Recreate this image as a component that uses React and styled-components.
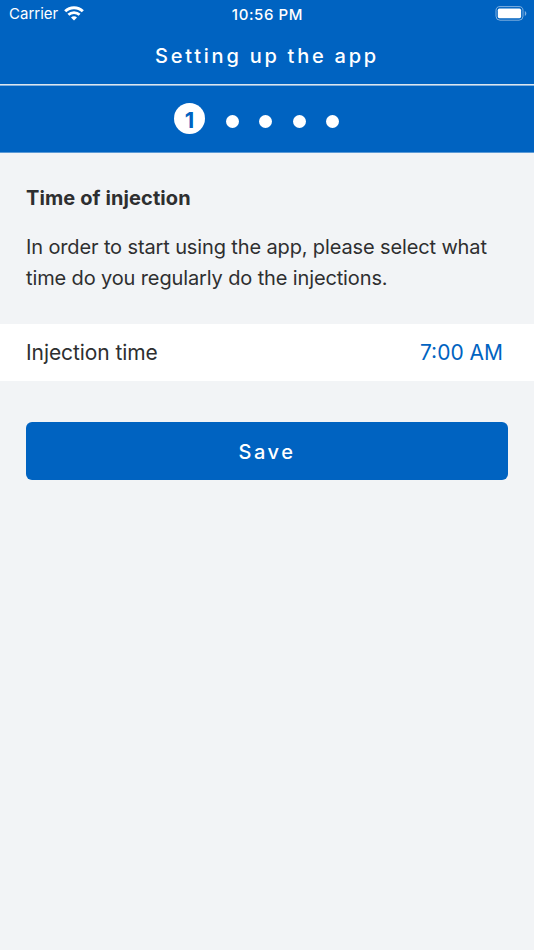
import styled, { createGlobalStyle } from "styled-components";

const GlobalStyle = createGlobalStyle`
  * {
    box-sizing: border-box;
  }
  body {
    margin: 0;
    background: #f2f4f6;
    color: #2e2f30;
    font-family: Inter, "Liberation Sans", sans-serif;
  }
`;

const Screen = styled.div`
  width: 100%;
  min-height: 950px;
  background: #f2f4f6;
`;

const StatusBar = styled.div`
  display: grid;
  grid-template-columns: 1fr auto 1fr;
  align-items: center;
  height: 27px;
  padding: 0 7px 0 9px;
  background: #0063c1;
  color: #fff;
  font-size: 15px;
`;

const Carrier = styled.div`
  display: flex;
  align-items: center;
  gap: 6px;
`;

const Clock = styled.div`
  margin-left: -1px;
  padding-top: 1px;
  font-size: 15px;
  font-weight: 500;
  letter-spacing: 0.6px;
`;

const Battery = styled.svg`
  justify-self: end;
`;

const Header = styled.header`
  display: flex;
  align-items: center;
  justify-content: center;
  height: 58px;
  padding-top: 1px;
  border-bottom: 1px solid #dde6ee;
  background: #0063c1;
`;

const Title = styled.h1`
  margin: 0;
  color: #fff;
  font-size: 20px;
  font-weight: 500;
  letter-spacing: 2.75px;
`;

const Steps = styled.div`
  display: flex;
  align-items: center;
  height: 68px;
  padding: 0 0 1px 174px;
  gap: 20.5px;
  border-top: 1px solid #7fb0df;
  border-bottom: 1px solid #5c9ad6;
  background: #0063c1;
`;

const CurrentStep = styled.div`
  display: flex;
  align-items: center;
  justify-content: center;
  width: 31px;
  height: 31px;
  padding-top: 2px;
  border-radius: 50%;
  background: #fff;
  color: #0063c1;
  font-size: 22px;
  font-weight: 700;
`;

const Dot = styled.div`
  width: 13px;
  height: 13px;
  margin-top: 5px;
  border-radius: 50%;
  background: #fff;
`;

const Intro = styled.section`
  height: 171px;
  padding: 30px 26px 0;
`;

const Heading = styled.h2`
  margin: 0 0 19px;
  font-size: 20px;
  line-height: 30px;
  font-weight: 700;
  letter-spacing: 0.1px;
`;

const Text = styled.p`
  margin: 0;
  font-size: 20px;
  line-height: 31px;
  letter-spacing: -0.13px;
`;

const TimeRow = styled.div`
  display: flex;
  align-items: center;
  justify-content: space-between;
  height: 57px;
  padding: 0 31px 0 26px;
  background: #fff;
  font-size: 21px;
`;

const Label = styled.span`
  letter-spacing: -0.08px;
`;

const Time = styled.span`
  color: #0063c1;
`;

const Actions = styled.div`
  padding: 41px 26px 0;
`;

const Button = styled.button`
  width: 100%;
  height: 58px;
  padding: 2px 0 0;
  border: none;
  border-radius: 6px;
  background: #0063c1;
  color: #fff;
  font-family: inherit;
  font-size: 20px;
  font-weight: 500;
  letter-spacing: 2.5px;
  cursor: pointer;
`;

const WifiIcon = () => (
  <svg width="20" height="15" viewBox="0 0 20 15" fill="none" stroke="#fff">
    <path d="M1.2 5.3C6.1.5 13.9.5 18.8 5.3" strokeWidth="3" />
    <path d="M4.4 8.8c3.1-3 8.1-3 11.2 0" strokeWidth="2.8" />
    <path d="M10 14.5 7 11.4c1.7-1.6 4.3-1.6 6 0z" fill="#fff" stroke="none" />
  </svg>
);

const App = () => {
  return (
    <Screen>
      <GlobalStyle />
      <StatusBar>
        <Carrier>
          <span>Carrier</span>
          <WifiIcon />
        </Carrier>
        <Clock>10:56 PM</Clock>
        <Battery width="32" height="15" viewBox="0 0 32 15">
          <rect x="1" y=".6" width="27" height="13.6" rx="4" fill="none" stroke="#80b1e0" />
          <rect x="2.8" y="2.6" width="23.3" height="9.6" rx="1.6" fill="#fff" />
          <path d="M29.8 5c2 .8 2 4.2 0 5z" fill="#80b1e0" />
        </Battery>
      </StatusBar>
      <Header>
        <Title>Setting up the app</Title>
      </Header>
      <Steps>
        <CurrentStep>1</CurrentStep>
        {[2, 3, 4, 5].map((step) => (
          <Dot key={step} />
        ))}
      </Steps>
      <Intro>
        <Heading>Time of injection</Heading>
        <Text>
          In order to start using the app, please select what
          <br />
          time do you regularly do the injections.
        </Text>
      </Intro>
      <TimeRow>
        <Label>Injection time</Label>
        <Time>7:00 AM</Time>
      </TimeRow>
      <Actions>
        <Button type="button">Save</Button>
      </Actions>
    </Screen>
  );
};

export default App;
